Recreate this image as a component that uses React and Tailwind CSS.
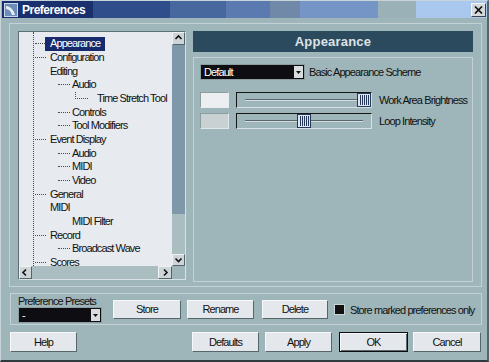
import React from "react";

const tree = [
  { t: "Appearance", l: 1, c: true, sel: true },
  { t: "Configuration", l: 1, c: true },
  { t: "Editing", l: 1, c: false },
  { t: "Audio", l: 2, c: true },
  { t: "Time Stretch Tool", l: 3 },
  { t: "Controls", l: 2, c: true },
  { t: "Tool Modifiers", l: 2, c: true },
  { t: "Event Display", l: 1, c: true },
  { t: "Audio", l: 2, c: true },
  { t: "MIDI", l: 2, c: true },
  { t: "Video", l: 2, c: true },
  { t: "General", l: 1, c: true },
  { t: "MIDI", l: 1, c: false },
  { t: "MIDI Filter", l: 2, c: false },
  { t: "Record", l: 1, c: true },
  { t: "Broadcast Wave", l: 2, c: true },
  { t: "Scores", l: 1, c: true },
];

function Row({ item }) {
  if (item.l === 1) {
    return (
      <div className="h-[13.67px] flex items-center whitespace-nowrap">
        {item.c ? (
          <span className={`ml-[1px] ${item.sel ? "w-[10px]" : "w-[11px]"} border-t border-dotted border-[#4a4a4a]`} />
        ) : (
          <span className={item.sel ? "w-[11px]" : "w-[12px]"} />
        )}
        {item.sel ? (
          <span className="h-[14px] px-[5px] flex items-center bg-[#172a6c] text-white">{item.t}</span>
        ) : (
          <span className="ml-[4px]">{item.t}</span>
        )}
      </div>
    );
  }
  if (item.l === 2) {
    return (
      <div className="h-[13.67px] flex items-center whitespace-nowrap">
        {item.c ? (
          <span className="ml-[24px] w-[12px] border-t border-dotted border-[#4a4a4a]" />
        ) : (
          <span className="ml-[24px] w-[12px]" />
        )}
        <span className="ml-[2px]">{item.t}</span>
      </div>
    );
  }
  return (
    <div className="h-[13.67px] flex items-center whitespace-nowrap">
      <span className="ml-[41px] w-[13px] h-[7px] self-start border-l border-b border-dotted border-[#4a4a4a]" />
      <span className="ml-[9px]">{item.t}</span>
    </div>
  );
}

function Arrow({ dir, className = "" }) {
  const paths = {
    up: "M1.5 5 L4.5 2 L7.5 5",
    down: "M1.5 2.5 L4.5 5.5 L7.5 2.5",
    left: "M5 1.5 L2 4.5 L5 7.5",
    right: "M3 1.5 L6 4.5 L3 7.5",
  };
  return (
    <div className={`flex items-center justify-center bg-[#cdd5d9] border border-t-[#eef2f3] border-l-[#eef2f3] border-b-[#53646a] border-r-[#53646a] ${className}`}>
      <svg width="9" height="9" viewBox="0 0 9 9">
        <path d={paths[dir]} fill="none" stroke="#111" strokeWidth="1.6" />
      </svg>
    </div>
  );
}

function Btn({ children, className = "", def = false }) {
  return (
    <div
      className={`flex items-center justify-center bg-[#e4e8ec] border ${
        def
          ? "border-[#0d0d0d] shadow-[inset_1px_1px_0_#f6f8fa,inset_-1px_-1px_0_#5a6a6f]"
          : "border-t-[#f6f8fa] border-l-[#f6f8fa] border-b-[#56666b] border-r-[#56666b]"
      } ${className}`}
    >
      {children}
    </div>
  );
}

function Slider({ pos }) {
  return (
    <div className="relative ml-[7px] w-[136px] h-[16px] border border-t-[#161616] border-l-[#161616] border-b-[#d6e0e2] border-r-[#d6e0e2] flex items-center">
      <div className="mx-[8px] flex-1 h-[2px] border-t border-t-[#58686d] border-b border-b-[#d4dee0]" />
      <div
        className="absolute top-0 w-[14px] h-[14px] bg-[#dfe5ec] border border-[#26385a] flex items-stretch justify-center gap-[1px] py-[1px]"
        style={{ left: pos }}
      >
        <div className="w-[1px] bg-[#26385a]" />
        <div className="w-[1px] bg-[#26385a]" />
        <div className="w-[1px] bg-[#26385a]" />
        <div className="w-[1px] bg-[#26385a]" />
        <div className="w-[1px] bg-[#26385a]" />
      </div>
    </div>
  );
}

export default function App() {
  return (
    <div className="w-[489px] h-[362px] bg-[#9eb5b9] border-t border-l border-t-[#c8d5d8] border-l-[#c8d5d8] border-r-2 border-b-2 border-r-[#56656a] border-b-[#2e3a3e] flex flex-col overflow-hidden font-['Liberation_Sans',Arial,sans-serif] text-[11px] tracking-[-0.9px] text-[#111] leading-none">
      {/* Title bar */}
      <div className="ml-[1px] h-[17px] flex items-center bg-[linear-gradient(to_right,#1a2f6e_91px,#2f4d8b_91px,#2f4d8b_168px,#47679f_168px,#47679f_224px,#5b7bb0_224px,#5b7bb0_268px,#7089a9_268px,#7089a9_298px,#7595c6_298px,#7595c6_376px,#9ab2b7_376px,#9ab2b7_414px,#aac8ed_414px)]">
        <svg className="ml-[2px]" width="14" height="14" viewBox="0 0 14 14">
          <rect x="0" y="0" width="14" height="14" fill="#6b8db8" />
          <rect x="0.5" y="0.5" width="13" height="13" fill="none" stroke="#c9d8ea" />
          <path d="M2 3 C6 3 10 7 11 12 L8 12 C7 8 5 6 2 6 Z" fill="#e8eef6" />
        </svg>
        <span className="ml-[4px] text-white font-bold text-[12px] tracking-[-0.5px]">Preferences</span>
        <div className="ml-auto mr-[1px] w-[15px] h-[14px] bg-[#d6dadd] border border-t-[#f4f6f7] border-l-[#f4f6f7] border-b-[#3c4649] border-r-[#3c4649] flex items-center justify-center">
          <svg width="9" height="8" viewBox="0 0 9 8">
            <path d="M1 0.5 L8 7.5 M8 0.5 L1 7.5" stroke="#111" strokeWidth="1.7" />
          </svg>
        </div>
      </div>

      {/* Main frame */}
      <div className="mt-[5px] ml-[8px] w-[473px] h-[264px] border border-[#c4d2d5] pl-[8px] pt-[7px] flex gap-[7px]">
        {/* Tree */}
        <div className="w-[168px] h-[249px] border border-t-[#5f7074] border-l-[#5f7074] border-b-[#d8e2e4] border-r-[#d8e2e4] bg-[#e7eaee] flex flex-col">
          <div className="flex h-[234px]">
            <div className="flex-1 overflow-hidden pl-[14px]">
              <div className="h-full border-l border-dotted border-[#4a4a4a] pt-[5px]">
                {tree.map((it, i) => (
                  <Row key={i} item={it} />
                ))}
              </div>
            </div>
            <div className="w-[13px] flex flex-col">
              <Arrow dir="up" className="h-[13px]" />
              <div className="h-[169px] bg-[#7e97a9]" />
              <div className="flex-1 bg-[#aabec2]" />
              <Arrow dir="down" className="h-[12px]" />
            </div>
          </div>
          <div className="h-[13px] flex">
            <Arrow dir="left" className="w-[13px]" />
            <div className="flex-1 bg-[#aabec2]" />
            <Arrow dir="right" className="w-[14px]" />
            <div className="w-[13px] bg-[#9eb5b9]" />
          </div>
        </div>

        {/* Right column */}
        <div className="w-[280px] flex flex-col">
          <div className="h-[21px] bg-[#2c4a5e] flex items-center justify-center text-[13px] font-bold tracking-[0.2px] text-[#dde3e6]">
            Appearance
          </div>
          <div className="mt-[5px] h-[225px] border border-[#c3d1d4] pt-[6px] pl-[6px] flex flex-col">
            <div className="h-[16px] flex items-center">
              <div className="w-[105px] h-[16px] bg-[#0e0e12] border border-[#8d9ea2] flex items-center">
                <span className="pl-[3px] text-white">Default</span>
                <div className="ml-auto mr-[1px] w-[9px] h-[12px] bg-[#d8dcdf] flex items-center justify-center">
                  <svg width="5" height="3" viewBox="0 0 5 3">
                    <path d="M0 0 L5 0 L2.5 3 Z" fill="#111" />
                  </svg>
                </div>
              </div>
              <span className="ml-[4px] whitespace-nowrap">Basic Appearance Scheme</span>
            </div>
            <div className="mt-[12px] h-[16px] flex items-center">
              <div className="w-[29px] h-[16px] bg-[#eceef1] border border-t-[#8a9da1] border-l-[#8a9da1] border-b-[#e8eef0] border-r-[#e8eef0]" />
              <Slider pos={120} />
              <span className="ml-[7px] whitespace-nowrap">Work Area Brightness</span>
            </div>
            <div className="mt-[5px] h-[16px] flex items-center">
              <div className="w-[29px] h-[16px] bg-[#c9d1d3] border border-t-[#8a9da1] border-l-[#8a9da1] border-b-[#e0e8ea] border-r-[#e0e8ea]" />
              <Slider pos={60} />
              <span className="ml-[7px] whitespace-nowrap">Loop Intensity</span>
            </div>
          </div>
        </div>
      </div>

      {/* Preset group */}
      <div className="mt-[6px] ml-[9px] w-[472px] h-[32px] border border-[#c4d2d5] flex items-start whitespace-nowrap">
        <div className="ml-[7px] flex flex-col">
          <span className="mt-[2px] h-[11px] leading-[11px]">Preference Presets</span>
          <div className="w-[84px] h-[16px] bg-[#0e0e12] border border-[#8d9ea2] flex items-center">
            <span className="pl-[3px] text-white">-</span>
            <div className="ml-auto mr-[1px] w-[9px] h-[12px] bg-[#d8dcdf] flex items-center justify-center">
              <svg width="5" height="3" viewBox="0 0 5 3">
                <path d="M0 0 L5 0 L2.5 3 Z" fill="#111" />
              </svg>
            </div>
          </div>
        </div>
        <Btn className="ml-[11px] mt-[6px] w-[68px] h-[19px]">Store</Btn>
        <Btn className="ml-[6px] mt-[6px] w-[67px] h-[19px]">Rename</Btn>
        <Btn className="ml-[8px] mt-[6px] w-[66px] h-[19px]">Delete</Btn>
        <div className="ml-[6px] mt-[10px] w-[11px] h-[11px] bg-[#111] border border-[#c8d4d6]" />
        <span className="ml-[5px] mt-[11px]">Store marked preferences only</span>
      </div>

      {/* Bottom buttons */}
      <div className="mt-[7px] flex">
        <Btn className="ml-[9px] w-[67px] h-[20px]">Help</Btn>
        <Btn className="ml-[115px] w-[67px] h-[20px]">Defaults</Btn>
        <Btn className="ml-[6px] w-[67px] h-[20px]">Apply</Btn>
        <Btn def className="ml-[7px] w-[69px] h-[20px]">OK</Btn>
        <Btn className="ml-[5px] w-[68px] h-[20px]">Cancel</Btn>
      </div>
    </div>
  );
}
